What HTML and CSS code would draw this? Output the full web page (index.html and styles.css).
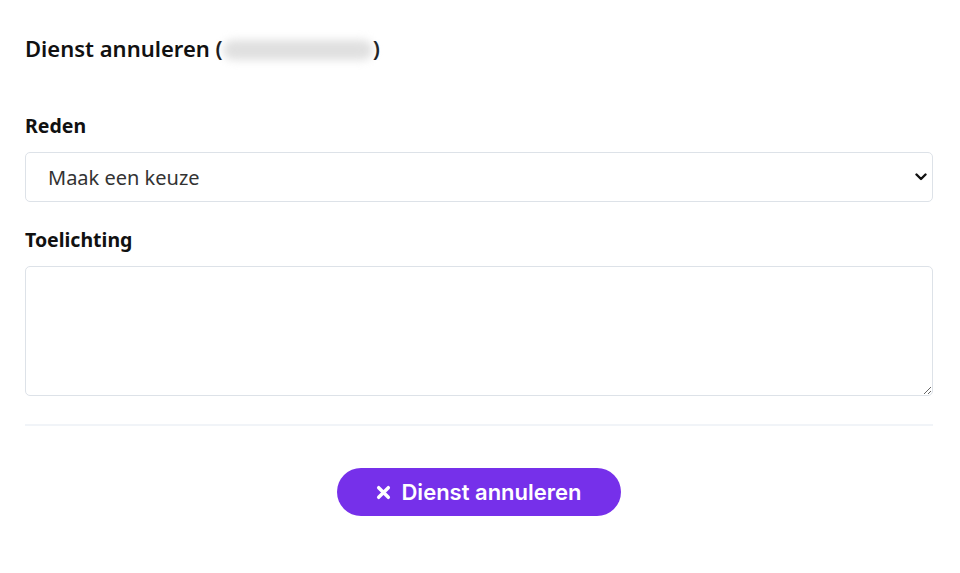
FILE: index.html
```html
<!DOCTYPE html>
<html lang="nl">
<head>
    <meta charset="UTF-8">
    <meta name="viewport" content="width=device-width, initial-scale=1.0">
    <title>Dienst annuleren</title>
    <link rel="stylesheet" href="styles.css">
</head>
<body>

<div class="container">
    <h2 class="heading">Dienst annuleren (<span class="blurred"></span>)</h2>

    <form class="form">
        <label class="label" for="reden">Reden</label>
        <div class="select-wrap">
            <select id="reden">
                <option value="">Maak een keuze</option>
            </select>
            <svg class="chevron" width="12" height="8" viewBox="0 0 12 8">
                <path d="M1.5 1.5 L6 6 L10.5 1.5" fill="none" stroke="#111" stroke-width="2.4" stroke-linecap="round" stroke-linejoin="round"/>
            </svg>
        </div>

        <label class="label" for="toelichting">Toelichting</label>
        <textarea id="toelichting"></textarea>

        <hr class="divider">

        <div class="actions">
            <button type="button" class="btn-cancel">
                <svg width="15" height="15" viewBox="0 0 14 14">
                    <path d="M2.5 2.5 L11.5 11.5 M11.5 2.5 L2.5 11.5" stroke="#fff" stroke-width="3.2" stroke-linecap="round"/>
                </svg>
                Dienst annuleren
            </button>
        </div>
    </form>
</div>

</body>
</html>
```

FILE: styles.css
```css
body {
    margin: 0;
    font-family: "Noto Sans", Arial, sans-serif;
    background-color: #fff;
    color: #111;
}
.container {
    padding: 34px 27px 0 25px;
}
.heading {
    font-size: 22px;
    font-weight: 600;
    margin: 0 0 52px;
    line-height: 28px;
}
.blurred {
    display: inline-block;
    background-color: #e0e0e0;
    border-radius: 10px;
    filter: blur(4px);
    width: 150px;
    height: 20px;
    vertical-align: -3px;
}
.form {
    display: flex;
    flex-direction: column;
}
.label {
    font-size: 19.5px;
    font-weight: 700;
    line-height: 24px;
    margin-bottom: 14px;
}
.select-wrap {
    position: relative;
    margin-bottom: 26px;
}
.select-wrap select {
    width: 100%;
    height: 50px;
    appearance: none;
    font-family: "Noto Sans", Arial, sans-serif;
    font-size: 20px;
    color: #333;
    padding: 0 22px;
    border: 1px solid #dde2e8;
    border-radius: 5px;
    background-color: #fff;
}
.chevron {
    position: absolute;
    right: 6px;
    top: 21px;
}
textarea {
    height: 130px;
    border: 1px solid #dde2e8;
    border-radius: 5px;
    box-sizing: border-box;
    font-family: "Noto Sans", Arial, sans-serif;
    font-size: 16px;
    padding: 10px 20px;
    margin: 0;
}
.divider {
    border: none;
    border-top: 2px solid #f1f4f8;
    margin: 28px 0 42px;
    width: 100%;
}
.actions {
    display: flex;
    justify-content: center;
}
.btn-cancel {
    display: flex;
    align-items: center;
    justify-content: center;
    gap: 10px;
    width: 284px;
    height: 48px;
    background-color: #7630ea;
    color: #fff;
    border: none;
    border-radius: 24px;
    font-family: Inter, Arial, sans-serif;
    font-size: 22px;
    font-weight: 600;
    cursor: pointer;
}
.btn-cancel:hover {
    background-color: #6420d6;
}
```
